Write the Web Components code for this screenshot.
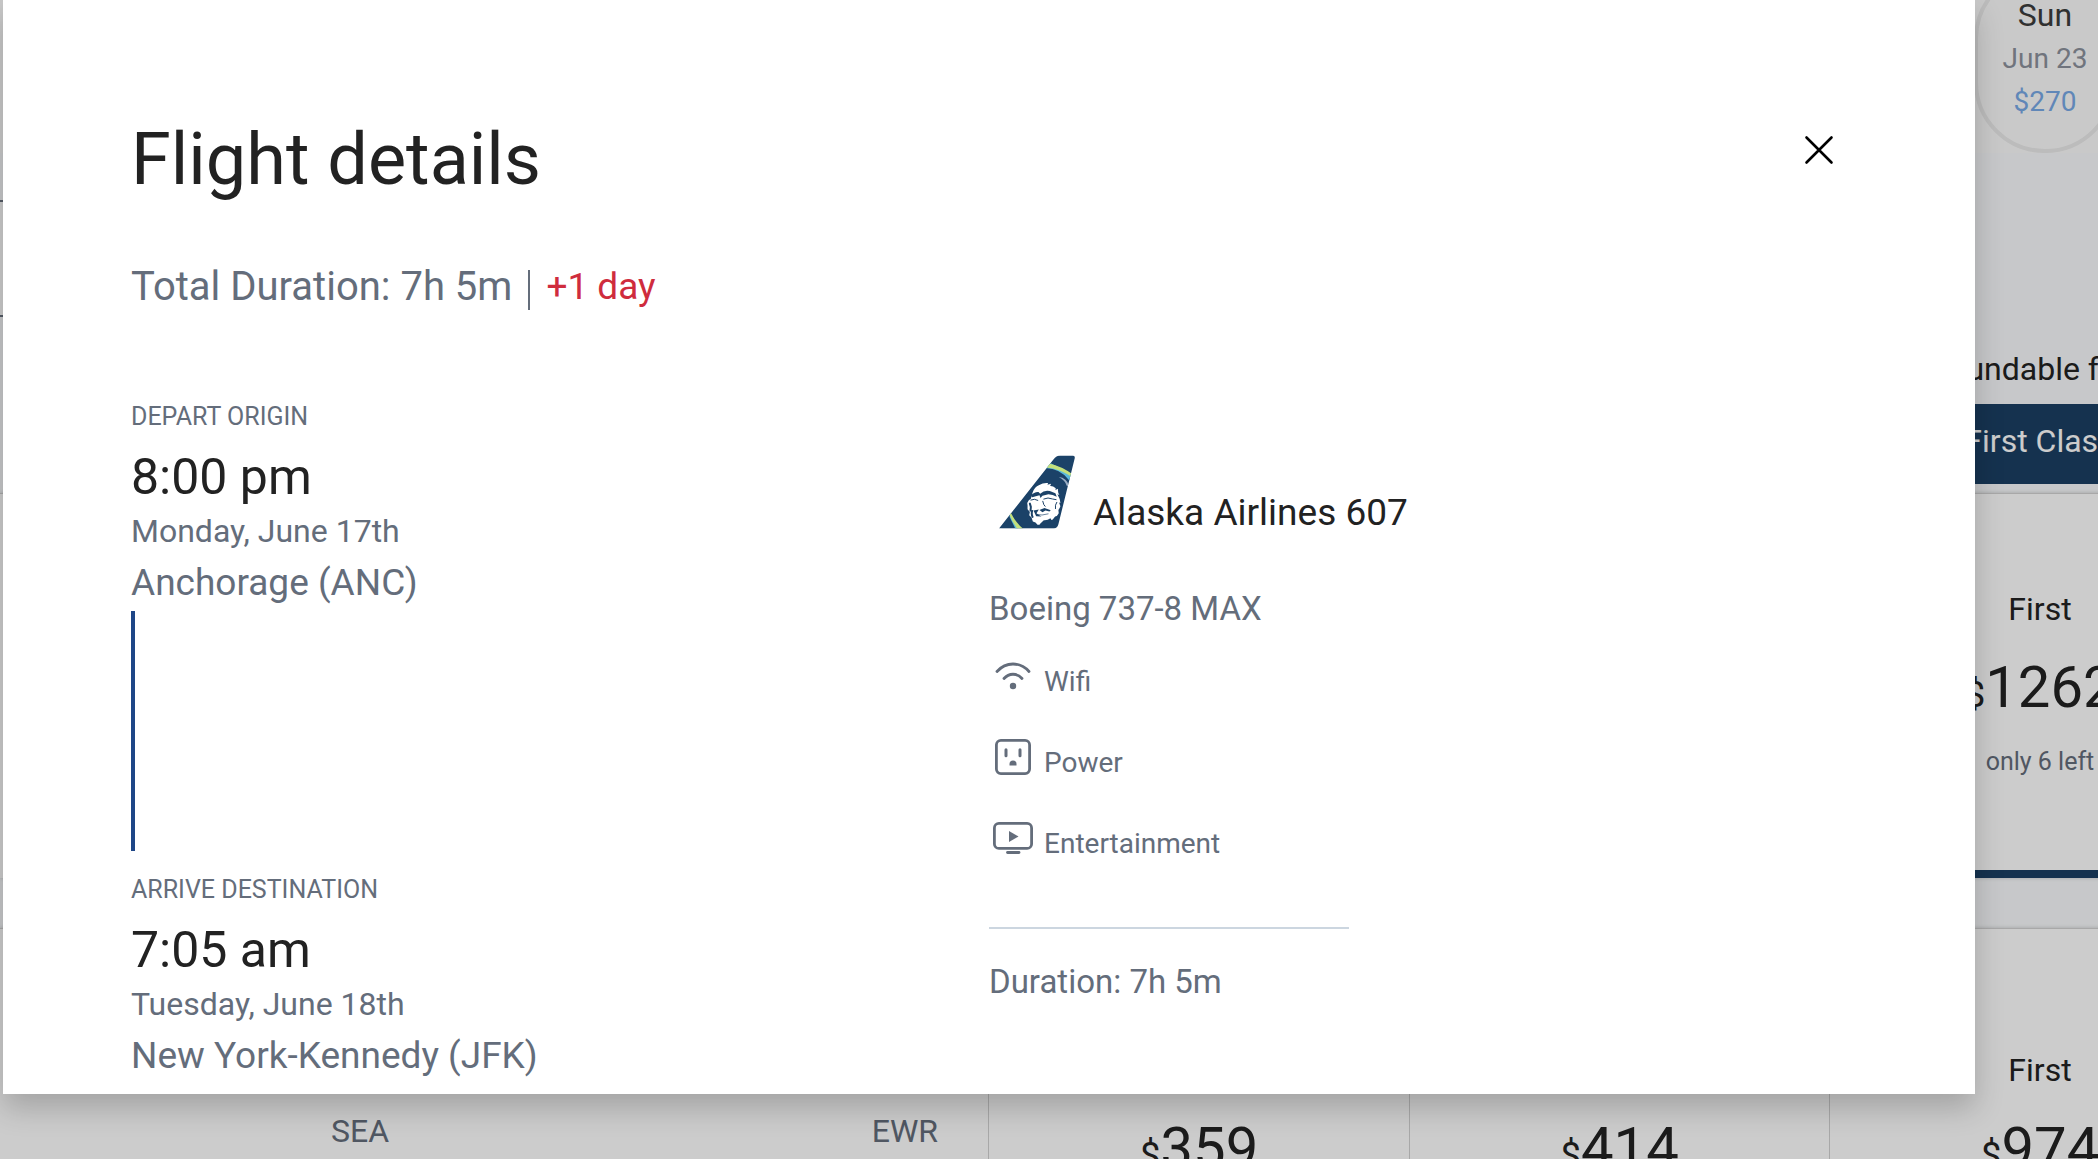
<!DOCTYPE html>
<html lang="en">
<head>
<meta charset="utf-8">
<title>Flight details</title>
<style>
  html, body {
    margin: 0;
    height: 100%;
    overflow: hidden;
  }

  body {
    font-family: Roboto, "Liberation Sans", sans-serif;
    color: #222;
    --navy: #1b3f63;
    --muted: #646d7b;
    --line: #d3d3d3;
  }
</style>
</head>
<body>
<flight-page>
  <flight-results></flight-results>
  <flight-dialog slot="dialog" heading="Flight details">
    <span slot="duration">Total Duration: 7h 5m</span>
    <span slot="offset">+1 day</span>
    <flight-stop slot="route" label="Depart origin" time="8:00 pm" date="Monday, June 17th" leg>Anchorage (ANC)</flight-stop>
    <flight-stop slot="route" label="Arrive destination" time="7:05 am" date="Tuesday, June 18th">New York-Kennedy (JFK)</flight-stop>
    <flight-aircraft slot="aircraft" carrier="Alaska Airlines 607" model="Boeing 737-8 MAX" duration="Duration: 7h 5m">
      <amenity-item icon="wifi">Wifi</amenity-item>
      <amenity-item icon="power">Power</amenity-item>
      <amenity-item icon="screen">Entertainment</amenity-item>
    </flight-aircraft>
  </flight-dialog>
</flight-page>

<script>
const ICONS = {
  wifi: `
    <g fill="none" stroke="currentColor" stroke-width="2.8" stroke-linecap="round">
      <path d="M4 15.500C13 5.500 27 5.500 36 15.500"/>
      <path d="M11 22.500C16 16.800 24 16.800 29 22.500"/>
    </g>
    <circle cx="20" cy="30" r="3.200" fill="currentColor"/>`,
  power: `
    <rect x="3.400" y="3.400" width="33.200" height="33.200" rx="4.500" fill="none" stroke="currentColor" stroke-width="2.800"/>
    <path d="M13 12.800v6M27 12.800v6" stroke="currentColor" stroke-width="3" stroke-linecap="round"/>
    <path d="M16.500 28.500v-1.500a3.500 3.500 0 0 1 7 0v1.500z" fill="currentColor"/>`,
  screen: `
    <rect x="1.400" y="5.400" width="37.200" height="25" rx="4.500" fill="none" stroke="currentColor" stroke-width="2.800"/>
    <path d="M16 13v11l9.500-5.500z" fill="currentColor"/>
    <path d="M14.500 34.500h11.500" stroke="currentColor" stroke-width="2.800" stroke-linecap="round"/>`
};

class FlightPage extends HTMLElement {
  constructor() {
    super();
    this.attachShadow({ mode: "open" });
    this.shadowRoot.innerHTML = `
      <style>
        :host {
          display: block;
          position: relative;
          height: 100%;
          overflow: hidden;
          background: #f9fbfd;
        }

        .scrim {
          position: absolute;
          inset: 0;
          padding: 0 123px 0 3px;
          background: rgba(0, 0, 0, .2);
        }
      </style>
      <slot></slot>
      <div class="scrim"><slot name="dialog"></slot></div>
    `;
  }
}
customElements.define("flight-page", FlightPage);

class FlightDialog extends HTMLElement {
  constructor() {
    super();
    this.attachShadow({ mode: "open" });
    this.shadowRoot.innerHTML = `
      <style>
        :host {
          display: block;
          background: #fff;
          box-shadow: 0 14px 28px rgba(0, 0, 0, .2);
          padding: 122px 128px 10px;
        }

        header {
          display: flex;
          justify-content: space-between;
          align-items: flex-start;
        }

        h1 {
          margin: 0;
          font-size: 72px;
          line-height: 76px;
          font-weight: 400;
        }

        button {
          display: grid;
          place-items: center;
          width: 56px;
          height: 56px;
          padding: 0;
          border: 0;
          background: none;
          color: #000;
          cursor: pointer;
        }

        .summary {
          display: flex;
          align-items: flex-end;
          margin-top: 64px;
          font-size: 40px;
          line-height: 46px;
          padding-top: 2px;
          color: var(--muted);
        }

        .bar {
          width: 2px;
          height: 40px;
          margin: 0 16px;
          background: var(--muted);
        }

        .offset {
          font-size: 37px;
          color: #cf2c3d;
        }

        .body {
          display: grid;
          grid-template-columns: 1fr 1fr;
          margin-top: 90px;
        }
      </style>
      <section role="dialog" aria-labelledby="heading">
        <header>
          <h1 id="heading"></h1>
          <button type="button" aria-label="Close">
            <svg width="32" height="32" viewBox="0 0 32 32" fill="none" stroke="currentColor" stroke-width="2.600" stroke-linecap="round">
              <path d="M3.500 3.500l25 25M28.500 3.500l-25 25"/>
            </svg>
          </button>
        </header>
        <div class="summary">
          <slot name="duration"></slot>
          <span class="bar"></span>
          <span class="offset"><slot name="offset"></slot></span>
        </div>
        <div class="body">
          <div><slot name="route"></slot></div>
          <div><slot name="aircraft"></slot></div>
        </div>
      </section>
    `;
  }

  connectedCallback() {
    this.shadowRoot.querySelector("h1").textContent = this.getAttribute("heading");
  }
}
customElements.define("flight-dialog", FlightDialog);

class FlightStop extends HTMLElement {
  constructor() {
    super();
    this.attachShadow({ mode: "open" });
    this.shadowRoot.innerHTML = `
      <style>
        :host {
          display: block;
          color: var(--muted);
        }

        :host([leg])::after {
          content: "";
          display: block;
          width: 4px;
          height: 240px;
          margin: 0 0 22px;
          background: #1e4687;
        }

        .label {
          margin-bottom: 13px;
          font-size: 25px;
          line-height: 34px;
          text-transform: uppercase;
        }

        .time {
          font-size: 50px;
          line-height: 60px;
          color: #222;
        }

        .date {
          font-size: 32px;
          line-height: 48px;
        }

        .place {
          font-size: 37px;
          line-height: 56px;
        }
      </style>
      <div class="label"></div>
      <div class="time"></div>
      <div class="date"></div>
      <div class="place"><slot></slot></div>
    `;
  }

  connectedCallback() {
    for (const name of ["label", "time", "date"]) {
      this.shadowRoot.querySelector("." + name).textContent = this.getAttribute(name);
    }
  }
}
customElements.define("flight-stop", FlightStop);

class AirlineLogo extends HTMLElement {
  constructor() {
    super();
    this.attachShadow({ mode: "open" });
    this.shadowRoot.innerHTML = `
      <style>
        :host {
          display: block;
          width: 76px;
          height: 74px;
        }

        svg {
          display: block;
        }
      </style>
      <svg width="76" height="74" viewBox="12 14 229 222" role="img" aria-label="Alaska Airlines">
        <defs>
          <clipPath id="tail"><path d="M12 235 176 27Q185 15 196 15H234Q242 15 240 24L191 222Q187 235 176 235Z"/></clipPath>
        </defs>
        <g clip-path="url(#tail)">
          <path fill="#1b4268" d="M0 0H252V252H0Z"/>
          <path fill="#5bb9dc" d="M152 53Q196 54 224 90L234 72 168 38Z"/>
          <path fill="#c3e07c" d="M160 38Q204 47 240 76V85Q196 54 154 51Z"/>
          <path fill="#9aadc4" d="M192 80Q216 82 224 108L216 106Q211 90 192 80Z"/>
          <path fill="#5bb9dc" d="M45 190Q60 218 70 237H62L44 200Z"/>
          <path fill="#c3e07c" d="M48 188Q65 222 88 238H68Q51 214 43 192Z"/>
          <path fill="#8f9fb3" d="M20 234H190V238H20Z"/>
        </g>
        <!-- face -->
        <path fill="#fff" d="M113 127Q120 109 132 105 146 96 160 98L158 103 169 100 166 107Q174 106 183 114L182 119 190 115Q188 125 194 134L188 132Q196 145 197 158L193 157 197 168Q194 176 191 179L192 189Q188 198 181 199L174 208 170 209 167 204Q158 211 147 210L136 221 134 224 128 224 122 217 114 214 110 202 103 195 105 185 98 177 98 165 97 158Q101 147 108 145Z"/>
        <path fill="#1b4268" d="M108 136Q118 124 131 125L136 130Q149 118 165 122L182 129 186 139Q174 133 161 132L143 136 137 143 134 135 112 141Z"/>
        <g fill="none" stroke="#1b4268" stroke-linecap="round" stroke-width="3">
          <path d="M108 149Q119 144 129 150M147 146Q160 140 173 146L184 148"/>
          <path d="M186 156Q180 164 182 175"/>
          <path stroke-width="6" d="M105 160 108 170 107 181M112 182Q109 191 113 200"/>
          <path stroke-width="3" d="M144 153 147 163 151 168"/>
          <path stroke-width="2" d="M127 193Q140 197 160 191"/>
        </g>
        <path fill="#1b4268" d="M116 181 132 178 125 189 130 193 140 199 124 198ZM134 179 149 173 168 180 164 184 152 181 143 186Z"/>
      </svg>
    `;
  }
}
customElements.define("airline-logo", AirlineLogo);

class AmenityItem extends HTMLElement {
  constructor() {
    super();
    this.attachShadow({ mode: "open" });
    this.shadowRoot.innerHTML = `
      <style>
        :host {
          display: flex;
          align-items: flex-end;
          gap: 11px;
          font-size: 28px;
          line-height: 28px;
        }

        svg {
          display: block;
        }
      </style>
      <svg width="40" height="40" viewBox="0 0 40 40" aria-hidden="true"></svg>
      <span><slot></slot></span>
    `;
  }

  connectedCallback() {
    this.shadowRoot.querySelector("svg").innerHTML = ICONS[this.getAttribute("icon")];
  }
}
customElements.define("amenity-item", AmenityItem);

class FlightAircraft extends HTMLElement {
  constructor() {
    super();
    this.attachShadow({ mode: "open" });
    this.shadowRoot.innerHTML = `
      <style>
        :host {
          display: block;
          padding-top: 55px;
          font-size: 33px;
          line-height: 40px;
          color: var(--muted);
        }

        .airline {
          display: flex;
          align-items: flex-end;
          gap: 18px;
          padding-left: 10px;
          margin-bottom: 60px;
          font-size: 37px;
          line-height: 32px;
          color: #222;
        }

        .amenities {
          display: grid;
          gap: 41px;
          margin: 27px 0 69px;
          padding-left: 4px;
        }

        hr {
          width: 360px;
          height: 2px;
          margin: 0 0 33px;
          border: 0;
          background: #ccd6e0;
        }
      </style>
      <div class="airline"><airline-logo></airline-logo><span class="carrier"></span></div>
      <div class="model"></div>
      <div class="amenities"><slot></slot></div>
      <hr>
      <div class="duration"></div>
    `;
  }

  connectedCallback() {
    for (const name of ["carrier", "model", "duration"]) {
      this.shadowRoot.querySelector("." + name).textContent = this.getAttribute(name);
    }
  }
}
customElements.define("flight-aircraft", FlightAircraft);

class DatePill extends HTMLElement {
  constructor() {
    super();
    this.attachShadow({ mode: "open" });
    this.shadowRoot.innerHTML = `
      <style>
        button {
          display: flex;
          flex-direction: column;
          justify-content: flex-end;
          align-items: center;
          box-sizing: border-box;
          width: 142px;
          height: 185px;
          padding: 0 0 26px;
          border: 4px solid #ebebeb;
          border-radius: 71px;
          background: none;
          font: 28px/43px Roboto, "Liberation Sans", sans-serif;
          color: #8d929d;
        }

        .day {
          font-size: 32px;
          color: #3c3c3c;
        }

        .price {
          color: #79a9e6;
        }
      </style>
      <button type="button">
        <span class="day"></span>
        <span class="date"></span>
        <span class="price"></span>
      </button>
    `;
  }

  connectedCallback() {
    for (const name of ["day", "date", "price"]) {
      this.shadowRoot.querySelector("." + name).textContent = this.getAttribute(name);
    }
  }
}
customElements.define("date-pill", DatePill);

class FareCell extends HTMLElement {
  constructor() {
    super();
    this.attachShadow({ mode: "open" });
    this.shadowRoot.innerHTML = `
      <style>
        :host {
          display: block;
          box-sizing: border-box;
          border-left: 1px solid var(--line);
          text-align: center;
          font-size: 32px;
          line-height: 40px;
        }

        .price {
          margin-top: 26px;
          font-size: 58px;
          line-height: 64px;
        }

        .price small {
          font-size: 37px;
          line-height: 1;
        }

        .left {
          margin-top: 27px;
          font-size: 25px;
          line-height: 32px;
          color: var(--muted);
        }
      </style>
      <div><slot></slot></div>
      <div class="price"><small>$</small><span></span></div>
      <div class="left"></div>
    `;
  }

  connectedCallback() {
    this.shadowRoot.querySelector(".price span").textContent = this.getAttribute("price");
    this.shadowRoot.querySelector(".left").textContent = this.getAttribute("left") || "";
  }
}
customElements.define("fare-cell", FareCell);

class FlightResults extends HTMLElement {
  constructor() {
    super();
    this.attachShadow({ mode: "open" });
    this.shadowRoot.innerHTML = `
      <style>
        /* the fare table runs past the right edge of the window */
        :host {
          display: block;
          width: calc(100% + 152px);
          font-size: 32px;
        }

        .dates {
          display: flex;
          justify-content: flex-end;
          align-items: flex-end;
          height: 153px;
          padding-right: 134px;
          background: #fcfcfc;
        }

        .search {
          width: 50%;
          height: 113px;
          margin: 47px 0 32px;
          border: solid #6b7280;
          border-width: 2px 0;
          background: #fff;
        }

        .row {
          display: grid;
          grid-template-columns: 1fr 421px 420px 421px;
        }

        .labels {
          line-height: 40px;
          text-align: center;
        }

        .classes {
          margin: 15px 0 9px;
          line-height: 75px;
          text-align: center;
          color: #fff;
        }

        .classes span {
          height: 80px;
          background: var(--navy);
        }

        .classes span:first-child {
          background: none;
        }

        .card {
          border-top: 1px solid var(--line);
          background: #fff;
          box-shadow: 0 0 4px rgba(0, 0, 0, .2);
        }

        .card fare-cell {
          padding-top: 95px;
        }

        .card.selected {
          margin-bottom: 50px;
        }

        .card.selected fare-cell {
          height: 384px;
          border-bottom: 8px solid var(--navy);
        }

        .card.next fare-cell {
          padding-top: 121px;
        }

        .route {
          display: flex;
          justify-content: space-between;
          padding: 182px 50px 0 331px;
          line-height: 40px;
          color: var(--muted);
        }
      </style>
      <div class="dates"><date-pill day="Sun" date="Jun 23" price="$270"></date-pill></div>
      <div class="search"></div>
      <div class="row labels"><span></span><span></span><span></span><span>Refundable fares</span></div>
      <div class="row classes"><span></span><span></span><span></span><span>First Class</span></div>
      <div class="row card selected">
        <span></span>
        <span></span>
        <span></span>
        <fare-cell price="1262" left="only 6 left">First</fare-cell>
      </div>
      <div class="row card next">
        <div class="route"><span>SEA</span><span>EWR</span></div>
        <fare-cell price="359">Saver</fare-cell>
        <fare-cell price="414">Main</fare-cell>
        <fare-cell price="974">First</fare-cell>
      </div>
    `;
  }
}
customElements.define("flight-results", FlightResults);
</script>
</body>
</html>
